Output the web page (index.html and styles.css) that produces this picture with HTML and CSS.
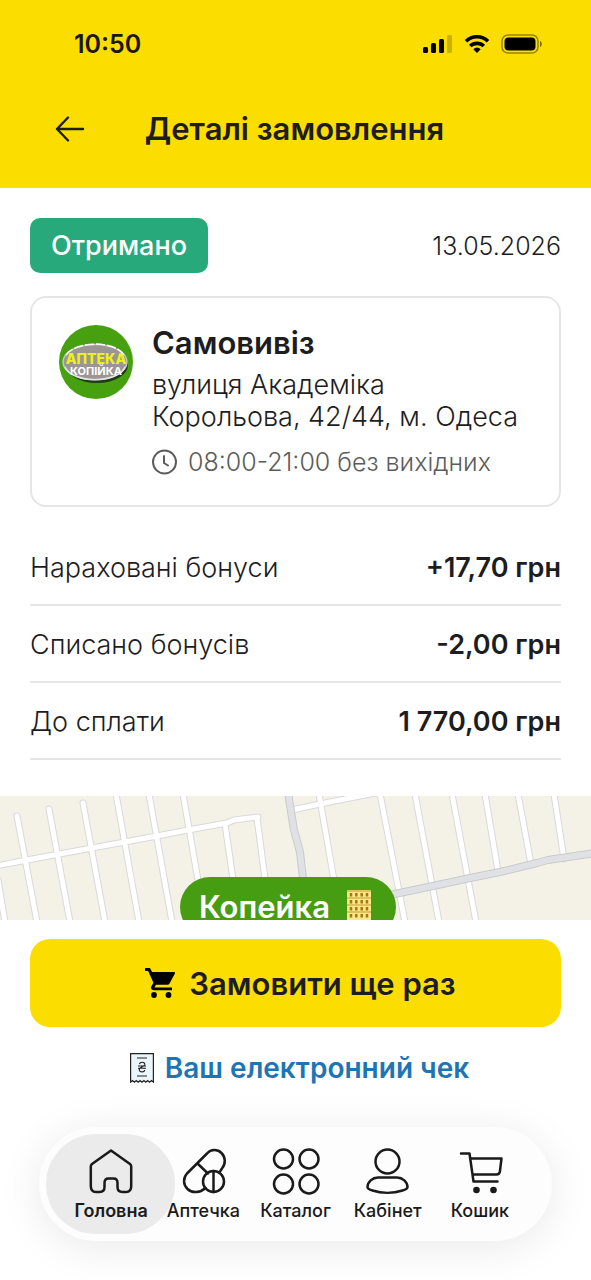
FILE: index.html
```html
<!DOCTYPE html>
<html lang="uk">
<head>
  <meta charset="UTF-8">
  <meta name="viewport" content="width=device-width, initial-scale=1.0">
  <title>Деталі замовлення</title>
  <link rel="stylesheet" href="styles.css">
</head>
<body>
  <header class="header">
    <div class="status-bar">
      <span class="clock">10:50</span>
      <div class="status-icons">
        <svg width="30" height="18" viewBox="0 0 30 18">
          <rect x="0" y="12" width="5" height="6" rx="1.5"/>
          <rect x="8" y="8" width="5" height="10" rx="1.5"/>
          <rect x="16" y="4" width="5" height="14" rx="1.5"/>
          <rect x="24" y="0" width="5" height="18" rx="1.5" opacity="0.2"/>
        </svg>
        <svg width="26" height="20" viewBox="0 0 26 20">
          <path d="M2 7.2a16 16 0 0 1 22 0M6.2 12a10 10 0 0 1 13.6 0" fill="none" stroke="#000" stroke-width="3.6"/>
          <path d="M9.3 15.2a5.6 5.6 0 0 1 7.4 0L13 19z"/>
        </svg>
        <svg width="42" height="20" viewBox="0 0 42 20">
          <rect x="1" y="1" width="36" height="18" rx="6" fill="none" stroke="#000" stroke-opacity="0.4" stroke-width="1.6"/>
          <rect x="3.500" y="3.500" width="31" height="13" rx="4"/>
          <path d="M39 7v6c2.4-1 2.4-5 0-6z" opacity="0.5"/>
        </svg>
      </div>
    </div>
    <div class="title-bar">
      <button class="back-button" aria-label="Назад">
        <svg width="30" height="26" viewBox="0 0 30 26" fill="none" stroke="#1d1d1b" stroke-width="2.4" stroke-linecap="round" stroke-linejoin="round">
          <path d="M28 13H2M13 1.500 2 13l11 11.500"/>
        </svg>
      </button>
      <h1>Деталі замовлення</h1>
    </div>
  </header>

  <main class="order">
    <div class="order-top">
      <span class="badge">Отримано</span>
      <span class="date">13.05.2026</span>
    </div>

    <section class="pickup-card">
      <svg class="pharmacy-logo" width="74" height="74" viewBox="0 0 74 74">
        <circle cx="37" cy="37" r="37" fill="#46a00f"/>
        <ellipse cx="38" cy="40" rx="31" ry="18" fill="#1f3a16"/>
        <ellipse cx="36" cy="37" rx="32" ry="17.500" fill="#9b9692" stroke="#c8c8c4" stroke-width="1.5"/>
        <path d="M7 30C16 16 56 15 65 30" fill="none" stroke="#fff" stroke-width="1.5" stroke-dasharray="9 2"/>
        <path d="M6 42C13 59 59 59 66 42" fill="none" stroke="#e4e4e4" stroke-width="1.5"/>
        <text class="logo-top" x="37" y="39" text-anchor="middle">АПТЕКА</text>
        <text class="logo-bottom" x="37" y="50" text-anchor="middle">КОПІЙКА</text>
      </svg>
      <div class="pickup-info">
        <h2>Самовивіз</h2>
        <p class="address">вулиця Академіка<br>Корольова, 42/44, м. Одеса</p>
        <p class="hours">
          <svg width="26" height="26" viewBox="0 0 26 26" fill="none" stroke="#5c5c5c" stroke-width="2" stroke-linecap="round" stroke-linejoin="round">
            <circle cx="12.500" cy="13" r="11.500"/>
            <path d="M12 7v7l4 2.500"/>
          </svg>
          08:00-21:00 без вихідних
        </p>
      </div>
    </section>

    <dl class="totals">
      <div class="total-row"><dt>Нараховані бонуси</dt><dd>+17,70 грн</dd></div>
      <div class="total-row"><dt>Списано бонусів</dt><dd>-2,00 грн</dd></div>
      <div class="total-row"><dt>До сплати</dt><dd>1 770,00 грн</dd></div>
    </dl>
  </main>

  <div class="map">
    <svg class="streets" viewBox="0 0 591 124" preserveAspectRatio="xMidYMin slice">
      <defs>
        <path id="streets" d="M-4 70 27 64 92 52 157 40 188 34 227 27 234 24 258 21M-2 84 5 126M17 20 37 126M49 13 70 126M83 7 105 126M116-2 139 126M149-2 172 126M183-2 199 90M225 28 234 90M257 22 266 90M292 14 320 8 375-3M319-2 335 90M380-2 405 126M415-2 439 126M452-2 476 126M485-2 498 75M518-2 531 68M554-2 564 63"/>
        <path id="avenues" d="M288-3 294 34 300 56 305 100M390 99 433 90 470 82 500 76 537 67 548 64 595 57"/>
      </defs>
      <g fill="none" stroke-linecap="round" stroke-linejoin="round">
        <use href="#streets" stroke="#d9d9dd" stroke-width="7"/>
        <use href="#streets" stroke="#fff" stroke-width="5"/>
        <use href="#avenues" stroke="#c9cacf" stroke-width="8"/>
        <use href="#avenues" stroke="#e0e1e5" stroke-width="6"/>
      </g>
    </svg>
    <div class="map-pin">
      Копейка
      <svg width="24" height="34" viewBox="0 0 24 34">
        <path fill="#f9e88c" d="M0 0h24v34H0z"/>
        <path d="M0 1h24M0 8h24M0 15h24M0 22h24" stroke="#c99a2a" stroke-width="1"/>
        <path d="M4 3v31M9.300 3v31M14.700 3v31M20 3v31" stroke="#a8780f" stroke-width="2.500" stroke-dasharray="3.500 3.500"/>
      </svg>
    </div>
  </div>

  <div class="actions">
    <button class="reorder-button">
      <svg width="30" height="30" viewBox="0 0 30 30">
        <path d="M0 0h5l2 4h22c1 0 1.300.8.9 1.600l-5.200 9.600c-.6 1.100-1.500 1.600-2.700 1.600H11l-1.500 2.700H27v2.800H9c-2.600 0-3.600-2-2.600-4l2-3.600L3.200 2.900H0z"/>
        <circle cx="9" cy="27" r="2.900"/>
        <circle cx="23.500" cy="27" r="2.900"/>
      </svg>
      Замовити ще раз
    </button>
    <a class="receipt-link" href="#">
      <svg width="24" height="30" viewBox="0 0 24 30" fill="none" stroke="#222">
        <path d="M.6.6h22.800v28.500l-1.900-1.600-1.900 1.600-1.900-1.600-1.900 1.600-1.900-1.600-1.900 1.600-1.900-1.600-1.900 1.600-1.900-1.600-1.900 1.600-1.900-1.600-1.900 1.600z" fill="#eaf6fc" stroke-width="1.200"/>
        <path d="M7 5h10M7 23h10"/>
        <path d="M8 13h8M8 15.200h8M9.300 11.200c.4-1.400 1.500-1.900 2.800-1.900 1.900 0 2.900 1 2.700 2.400-.4 1.900-5.300 2.300-5.600 4.700-.1 1.600 1.100 2.500 2.900 2.500 1.400 0 2.400-.6 2.800-1.900" stroke-width="1.100"/>
      </svg>
      Ваш електронний чек
    </a>
  </div>

  <nav class="tab-bar">
    <a class="tab active" href="#">
      <svg viewBox="0 0 48 48">
        <path d="M24 3.500 43 17c.8.6 1.200 1.400 1.200 2.400V39c0 4-1.800 6-5 6h-3.700c-3.200 0-5-2-5-5v-4c0-3-1.500-4.500-4-4.500h-5c-2.500 0-4 1.500-4 4.500v4c0 3-1.800 5-5 5H8.800c-3.200 0-5-2-5-6V19.400c0-1 .4-1.800 1.200-2.400z"/>
      </svg>
      Головна
    </a>
    <a class="tab" href="#">
      <svg viewBox="0 0 48 48">
        <path d="M26.500 41C21 46 13 46.500 8.500 42S4 31 8 26.500L28 6.500C32 2 38.500 2 42.500 6s4.500 11 .5 15.500L41 24.500M18.500 16.500 29 26.500"/>
        <circle cx="34.500" cy="34.500" r="10.500"/>
        <path d="M34.500 24v21"/>
      </svg>
      Аптечка
    </a>
    <a class="tab" href="#">
      <svg viewBox="0 0 48 48">
        <circle cx="11.500" cy="12" r="9.500"/>
        <circle cx="37" cy="12" r="9.500"/>
        <circle cx="11.500" cy="37" r="9.500"/>
        <circle cx="37" cy="37" r="9.500"/>
      </svg>
      Каталог
    </a>
    <a class="tab" href="#">
      <svg viewBox="0 0 48 48">
        <circle cx="23.500" cy="14.500" r="12"/>
        <path d="M14 30.500h19c5.500 0 10.500 4.500 10.500 9.500 0 2-3 3-5 3.500-9 3-21 3-30 0-2-.5-5-1.500-5-3.500 0-5 5-9.500 10.500-9.500z"/>
      </svg>
      Кабінет
    </a>
    <a class="tab" href="#">
      <svg viewBox="0 0 48 48">
        <path d="M5 6.500h8.500l4 28h24M14.500 11.500H45.500l-1.600 13c-.3 2-1.400 3-3.500 3H17"/>
        <circle class="wheel" cx="20.500" cy="43" r="3.300"/>
        <circle class="wheel" cx="37.500" cy="43" r="3.300"/>
      </svg>
      Кошик
    </a>
  </nav>
</body>
</html>
```
FILE: styles.css
```css
* {
  box-sizing: border-box;
}
body {
  font-family: Inter, "Liberation Sans", sans-serif;
  font-size: 27px;
  line-height: 32px;
  color: #1d1d1f;
  background-color: white;
  min-height: 100vh;
  margin: 0;
  display: flex;
  flex-direction: column;
}
h1, h2, p, dl, dd {
  margin: 0;
}
button {
  font-family: inherit;
  color: inherit;
  border: none;
  cursor: pointer;
}
a {
  text-decoration: none;
}
svg {
  flex: none;
}

/* Header */
.header {
  background-color: #fbde00;
}
.status-bar {
  display: flex;
  justify-content: space-between;
  align-items: center;
  height: 88px;
  padding: 0 48px 0 74px;
}
.clock {
  font-size: 25px;
  font-weight: 600;
  color: #1d1700;
}
.status-icons {
  display: flex;
  align-items: center;
  gap: 11px;
}
.title-bar {
  display: flex;
  align-items: center;
  height: 100px;
  padding: 0 55px 18px;
}
.back-button {
  display: flex;
  background: none;
  padding: 0;
}
h1 {
  flex: 1;
  margin-right: 32px;
  font-size: 31px;
  font-weight: 600;
  line-height: 40px;
  text-align: center;
}

/* Order */
.order {
  padding: 30px 30px 36px;
}
.order-top {
  display: flex;
  justify-content: space-between;
  align-items: center;
}
.badge {
  background-color: #28a97c;
  color: white;
  font-weight: 500;
  line-height: 55px;
  padding: 0 21px;
  border-radius: 10px;
}
.date {
  font-size: 25px;
  font-weight: 300;
}
.pickup-card {
  display: flex;
  gap: 19px;
  margin-top: 23px;
  padding: 27px;
  border: 2px solid #e6e6e6;
  border-radius: 16px;
}
.logo-top {
  font: 800 14px Inter, sans-serif;
  fill: #eaf21c;
}
.logo-bottom {
  font: 700 11px Inter, sans-serif;
  fill: white;
}
h2 {
  font-size: 31px;
  font-weight: 600;
  line-height: 36px;
}
.address {
  margin-top: 8px;
  font-weight: 300;
}
.hours {
  display: flex;
  align-items: center;
  gap: 10px;
  margin-top: 13px;
  font-size: 25px;
  font-weight: 300;
  color: #5c5c5c;
}
.totals {
  margin-top: 22px;
}
.total-row {
  display: flex;
  justify-content: space-between;
  padding: 23px 0 20px;
  border-bottom: 2px solid #e6e6e6;
}
.total-row dt {
  font-weight: 300;
}
.total-row dd {
  font-weight: 600;
}

/* Map */
.map {
  position: relative;
  flex: 1;
  min-height: 120px;
  overflow: hidden;
  background-color: #f4f2e7;
}
.streets {
  position: absolute;
  width: 100%;
  height: 100%;
}
.map-pin {
  position: absolute;
  top: 81px;
  left: 180px;
  display: flex;
  align-items: center;
  gap: 17px;
  height: 60px;
  padding: 0 25px 0 19px;
  border-radius: 30px;
  background-color: #469d11;
  color: white;
  font-size: 31px;
  font-weight: 600;
}

/* Actions */
.actions {
  display: flex;
  flex-direction: column;
  align-items: center;
  gap: 25px;
  padding: 19px 30px 0;
}
.reorder-button {
  display: flex;
  justify-content: center;
  align-items: center;
  gap: 14px;
  width: 100%;
  height: 88px;
  padding: 0 0 0 10px;
  border-radius: 20px;
  background-color: #fbde00;
  font-size: 31px;
  font-weight: 600;
}
.receipt-link {
  display: flex;
  align-items: center;
  gap: 11px;
  padding-left: 8px;
  color: #1d75b5;
  font-size: 28px;
  font-weight: 600;
}

/* Tab bar */
.tab-bar {
  display: flex;
  margin: 43px 39px 39px;
  height: 114px;
  padding: 20px 26px 0;
  border-radius: 57px;
  background-color: #fdfdfd;
  box-shadow: 0 6px 44px rgba(0, 0, 0, 0.09);
}
.tab {
  position: relative;
  z-index: 1;
  flex: 1 1 0;
  display: flex;
  flex-direction: column;
  align-items: center;
  gap: 4px;
  color: #1a1a1a;
  font-size: 18px;
  font-weight: 500;
  line-height: 24px;
}
.tab svg {
  width: 48px;
  height: 48px;
  fill: none;
  stroke: #1a1a1a;
  stroke-width: 2.5;
  stroke-linecap: round;
  stroke-linejoin: round;
}
.tab .wheel {
  fill: #1a1a1a;
  stroke: none;
}
.tab.active {
  z-index: 0;
  font-weight: 600;
}
.tab.active::before {
  content: "";
  position: absolute;
  z-index: -1;
  top: -13px;
  left: -19px;
  right: -18px;
  height: 100px;
  border-radius: 50px;
  background-color: #ebebeb;
}
```
